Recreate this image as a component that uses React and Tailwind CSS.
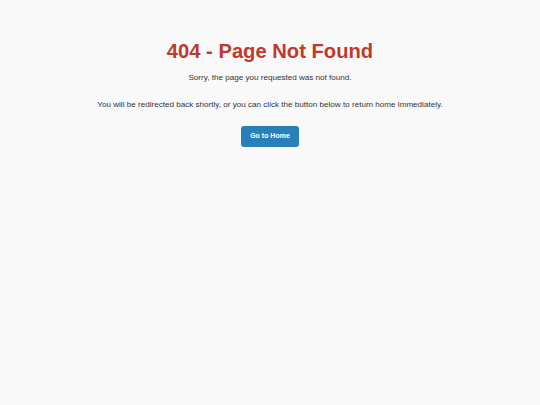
const App = () => {
  return (
    <div
      className="min-h-screen bg-[#f9f9f9] flex flex-col items-center pt-[39px] text-center"
      style={{ fontFamily: '"Liberation Sans", Arial, sans-serif' }}
    >
      <h1 className="text-[20.2px] leading-[24px] font-bold text-[#c0392b]">404 - Page Not Found</h1>
      <p className="mt-[9px] text-[8.1px] leading-[12px] text-[#333]">Sorry, the page you requested was not found.</p>
      <p className="mt-[15px] text-[8.1px] leading-[12px] text-[#333]">
        You will be redirected back shortly, or you can click the button below to return home immediately.
      </p>
      <button
        type="button"
        className="mt-[15px] h-[21px] w-[58px] rounded-[3px] bg-[#2980b9] text-white text-[7px] font-bold"
      >
        Go to Home
      </button>
    </div>
  );
};

export default App;
